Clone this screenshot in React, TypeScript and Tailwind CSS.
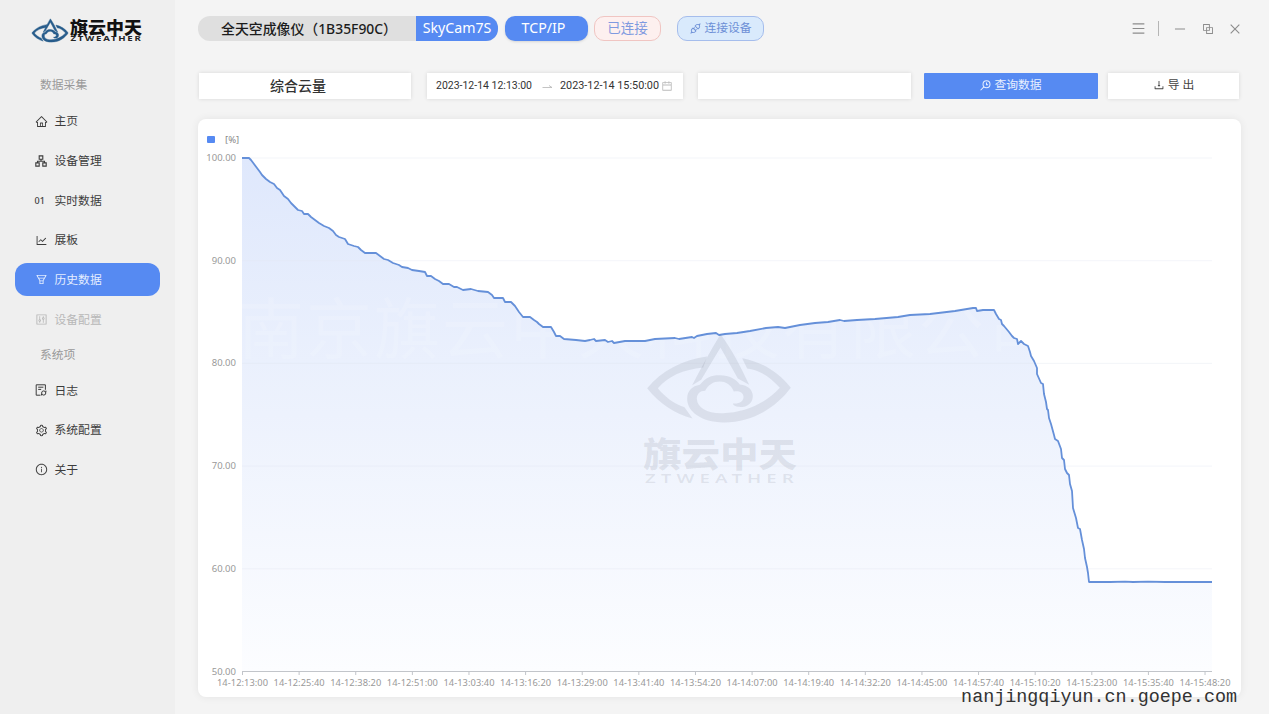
import React from 'react';
import {
  AiOutlineApi,
  AiOutlineBlock,
  AiOutlineCalendar,
  AiOutlineClose,
  AiOutlineControl,
  AiOutlineDownload,
  AiOutlineFunnelPlot,
  AiOutlineHome,
  AiOutlineInfoCircle,
  AiOutlineLineChart,
  AiOutlineMenu,
  AiOutlineMinus,
  AiOutlineSetting,
} from 'react-icons/ai';

const LogoMark: React.FC = () => (
  <g>
    <path d="M692 222 C664 268 636 318 607 375 L634 359 L692 262 L744 355 L778 374 C752 318 726 268 692 222Z" />
    <path d="M652 289 C580 298 515 332 472 384 C510 432 555 460 608 475 L584 441 C552 430 525 410 504 384 C535 348 580 328 640 322Z" />
    <path d="M757 294 C815 305 865 335 903 383 C860 440 790 488 700 487 C635 486 592 455 592 416 C592 392 607 378 630 374 C648 350 670 344 690 345 C720 346 738 356 750 373 C775 375 789 390 789 408 C788 432 768 443 744 440 C734 438 728 434 730 430 C750 432 762 422 761 409 C759 396 748 392 732 394 C724 374 708 364 690 364 C670 364 655 374 646 392 C630 392 621 402 621 416 C622 445 655 461 700 459 C765 457 830 428 870 383 C842 350 810 330 772 325Z" />
  </g>
);

const ClusterIcon: React.FC = () => (
  <svg viewBox="0 0 12 12" className="size-3" fill="none" stroke="currentColor" strokeWidth="1.1">
    <path d="M4.2 .9h3.6v3.4H4.2zM.8 7.9h3.4v3.2H.8zM7.8 7.9h3.4v3.2H7.8zM6 4.3v1.9M2.5 7.9V6.2h7v1.7" />
  </svg>
);

const LogIcon: React.FC = () => (
  <svg viewBox="0 0 12 12" className="size-3" fill="none" stroke="currentColor" strokeWidth="1">
    <path d="M5.5 11.2H1.2V.8h9.2v5M3.2 3.2h5.2M3.2 5.4h3" />
    <circle cx="8.7" cy="9" r="2.1" />
    <path d="M10.9 6.6v1.6M6.5 9.8v1.6" />
  </svg>
);

const SearchIcon: React.FC = () => (
  <svg viewBox="0 0 12 12" className="size-[11px]" fill="none" stroke="currentColor" strokeWidth="1.1">
    <circle cx="7.1" cy="4.7" r="3.8" />
    <path d="M4.2 7.6L.6 11.2M7.1 2.8v2.3h1.7" />
  </svg>
);

interface NavItemProps {
  icon: React.ReactNode;
  label: string;
  active?: boolean;
  disabled?: boolean;
}

const NavItem: React.FC<NavItemProps> = ({ icon, label, active, disabled }) => {
  const color = active ? 'bg-[#568af2] text-[#e4edff]' : disabled ? 'text-[#b8b8b8]' : 'text-[#3c3c3c]';
  return (
    <div className={`flex h-[33px] items-center rounded-xl pl-5 text-[11.8px] ${color}`}>
      <span className="flex w-5 items-center text-[13px]">{icon}</span>
      <span>{label}</span>
    </div>
  );
};

const Sidebar: React.FC = () => (
  <aside className="flex w-[175px] shrink-0 flex-col bg-[#efefef] pl-[14.5px] pr-[15px]">
    <svg viewBox="0 0 112 26" className="ml-4 mt-[17px] h-[26px] w-28">
      <svg x="0.500" y="1.500" width="37" height="24" viewBox="470 220 435 270" preserveAspectRatio="none" fill="#285d8c" stroke="#285d8c" strokeWidth="5">
        <LogoMark />
      </svg>
      <text x="39" y="17" textLength="72" lengthAdjust="spacingAndGlyphs" className="text-[17px] font-black" fill="#111">
        旗云中天
      </text>
      <text x="39.500" y="24.300" textLength="72" lengthAdjust="spacingAndGlyphs" className="text-[6.6px] font-bold tracking-[1.2px]" fill="#222">
        ZTWEATHER
      </text>
    </svg>
    <div className="ml-[25.5px] mt-8 h-[19px] text-[11.8px] leading-[19px] text-[#999]">数据采集</div>
    <nav className="mt-[10.5px] flex flex-col gap-[6.7px]">
      <NavItem icon={<AiOutlineHome />} label="主页" />
      <NavItem icon={<ClusterIcon />} label="设备管理" />
      <NavItem icon={<span className="text-[9px] font-medium">01</span>} label="实时数据" />
      <NavItem icon={<AiOutlineLineChart />} label="展板" />
      <NavItem icon={<AiOutlineFunnelPlot />} label="历史数据" active />
      <NavItem icon={<AiOutlineControl />} label="设备配置" disabled />
    </nav>
    <div className="ml-[25.5px] mt-[9px] h-[19px] text-[11.8px] leading-[19px] text-[#999]">系统项</div>
    <nav className="mt-2.5 flex flex-col gap-[6.7px]">
      <NavItem icon={<LogIcon />} label="日志" />
      <NavItem icon={<AiOutlineSetting />} label="系统配置" />
      <NavItem icon={<AiOutlineInfoCircle />} label="关于" />
    </nav>
  </aside>
);

const Header: React.FC = () => (
  <header className="flex h-[25px] items-center">
    <div className="flex h-[25px] items-center overflow-hidden rounded-[12px] bg-[#dfdfdf] text-[14px]">
      <span className="flex w-[218px] items-center whitespace-nowrap pl-[23px]">
        <svg width="176" height="24">
          <text x="0" y="16.500" textLength="176" lengthAdjust="spacingAndGlyphs" fontWeight="500" fill="#1c1c1c">
            全天空成像仪（1B35F90C）
          </text>
        </svg>
      </span>
      <span className="flex h-full w-[82px] items-center justify-center bg-[#568af2] pb-0.5 text-[14.2px] text-white">SkyCam7S</span>
    </div>
    <div className="ml-[7px] flex h-[25px] w-[83px] items-center justify-center rounded-[10px] bg-[#568af2] pb-0.5 pr-1.5 text-[14.2px] text-white shadow-sm">
      TCP/IP
    </div>
    <div className="ml-1.5 flex h-[25px] w-[67px] items-center justify-center rounded-[10px] border border-[#f0c5c2] bg-[#fdf0ef] text-[13.5px] text-[#7f9ae0]">
      已连接
    </div>
    <div className="ml-4 flex h-[25px] w-[87px] items-center justify-center gap-0.5 rounded-[10px] border border-[#a5bdec] bg-[#d9eafc] pb-px text-[11.8px] text-[#6c8fd6]">
      <AiOutlineApi className="text-[13px]" />
      连接设备
    </div>
    <div className="ml-auto flex items-center pr-[3px] text-[#8c8c8c]">
      <AiOutlineMenu className="text-[15px]" />
      <span className="ml-3 h-[15px] w-px bg-[#b5b5b5]" />
      <AiOutlineMinus className="ml-3.5 text-[14px]" />
      <AiOutlineBlock className="ml-3.5 text-[14px]" />
      <AiOutlineClose className="ml-[13px] text-[14px]" />
    </div>
  </header>
);

const Toolbar: React.FC = () => (
  <div className="mt-8 flex h-[26px] w-[1041px] items-stretch pl-px text-[11.8px] text-[#333]">
    <div className="flex w-[212px] items-center justify-center bg-white pb-0.5 pr-3.5 text-[14px] font-medium shadow-[0_0_4px_rgba(0,0,0,0.12)]">综合云量</div>
    <div className="ml-4 flex w-64 items-center bg-white pl-[9px] shadow-[0_0_4px_rgba(0,0,0,0.12)]">
      <svg width="226" height="24" className="overflow-visible font-['Roboto'] text-[11.5px]" fill="#333">
        <text x="0" y="14.500" textLength="96" lengthAdjust="spacingAndGlyphs">2023-12-14 12:13:00</text>
        <path d="M106.500 13.500h9.500M113 11.500l3 2" stroke="#b5b5b5" strokeWidth="0.800" fill="none" />
        <text x="124" y="14.500" textLength="99" lengthAdjust="spacingAndGlyphs">2023-12-14 15:50:00</text>
      </svg>
      <AiOutlineCalendar className="-ml-px text-[12px] text-[#bbb]" />
    </div>
    <div className="ml-[15px] w-[213px] bg-white shadow-[0_0_4px_rgba(0,0,0,0.12)]" />
    <button className="ml-[13px] flex w-[174px] items-center justify-center gap-[3px] rounded-[1px] bg-[#568af2] pb-0.5 text-[#e9f0ff]">
      <SearchIcon />
      查询数据
    </button>
    <button className="ml-2.5 flex w-[131px] items-center justify-center gap-[3px] bg-white pb-0.5 text-[#444] shadow-[0_0_4px_rgba(0,0,0,0.12)]">
      <AiOutlineDownload className="text-[12px]" />
      导 出
    </button>
  </div>
);

const yTicks = [100, 90, 80, 70, 60, 50];

const xTicks = [
  '14-12:13:00', '14-12:25:40', '14-12:38:20', '14-12:51:00', '14-13:03:40', '14-13:16:20',
  '14-13:29:00', '14-13:41:40', '14-13:54:20', '14-14:07:00', '14-14:19:40', '14-14:32:20',
  '14-14:45:00', '14-14:57:40', '14-15:10:20', '14-15:23:00', '14-15:35:40', '14-15:48:20',
];

const line =
  '242,158 249,158 251,160 254,164 257,168 260,172 262,175 266,179 270,182 274,184 277,188 280,190 284,196 288,199 291,203 294,206 298,210 302,211 304,214 308,214 311,217 315,220 319,223 324,226 329,228 333,231 336,235 339,237 345,239 348,244 354,246 358,247 361,250 365,253 376,253 380,256 384,259 388,260 393,263 399,265 402,267 408,268 412,270 419,271 425,272 427,276 431,276 435,279 439,281 443,284 449,284 454,287 457,287 463,290 471,289 478,291 488,292 492,295 494,298 503,298 505,302 511,302 515,306 519,312 523,317 530,317 534,320 537,322 539,324 543,327 551,327 554,332 556,336 560,336 564,339 576,340 585,341 590,340 594,339 596,341 605,340 608,342 612,341 614,343 625,341 645,341 655,339 675,338 679,339 692,337 694,338 697,336 707,334 716,333 719,335 725,334 737,333 750,331 766,328 778,327 785,328 795,326 800,325 815,323 828,322 840,320 844,321 857,320 875,319 898,317 910,315 930,314 955,311 973,308 976,308 977,311 983,310 994,310 996,314 999,319 1001,320 1002,324 1004,326 1009,332 1012,336 1014,338 1017,339 1018,344 1021,341 1024,344 1028,346 1030,352 1031,356 1034,361 1037,368 1037,374 1041,383 1043,384 1044,394 1046,402 1047,409 1048,410 1049,418 1051,424 1054,435 1055,439 1058,441 1061,449 1062,458 1064,460 1065,469 1067,473 1069,475 1070,484 1072,491 1073,508 1076,518 1078,528 1080,529 1082,540 1084,549 1085,558 1087,567 1088,573 1089,582 1110,582 1125,581.700 1133,582 1148,581.700 1165,582 1185,581.800 1190,582 1200,581.800 1212,582';

// drawn in window coordinates, the card starts at 198,119
const Chart: React.FC = () => (
  <svg viewBox="198 119 1043 578" className="h-[578px] w-[1043px]">
    <defs>
      <linearGradient id="area" x1="0" y1="158" x2="0" y2="671" gradientUnits="userSpaceOnUse">
        <stop offset="0" stopColor="#dfe8fc" />
        <stop offset="0.5" stopColor="#edf2fd" />
        <stop offset="1" stopColor="#fcfdff" />
      </linearGradient>
      <clipPath id="plot">
        <polygon points={`${line} 1212,671 242,671`} />
      </clipPath>
    </defs>
    <rect x="207" y="136" width="8" height="7" rx="1" fill="#568af2" />
    <text x="225" y="143" fontSize="9.500" fill="#888">[%]</text>
    <polygon points={`${line} 1212,671 242,671`} fill="url(#area)" />
    <text x="238" y="353" fontSize="66" letterSpacing="2" fill="#fff" fillOpacity="0.13" clipPath="url(#plot)">
      南京旗云中天科技有限公司
    </text>
    {yTicks.map((tick, i) => (
      <g key={tick}>
        {tick > 50 && <path d={`M242 ${158 + i * 102.7}H1212`} stroke="#e0e6f1" strokeOpacity="0.4" />}
        <text x="236" y={161 + i * 102.7} textAnchor="end" fontSize="9.5" fill="#999">
          {tick.toFixed(2)}
        </text>
      </g>
    ))}
    <path d="M242 671.500H1212" stroke="#c2c5ca" />
    {xTicks.map((tick, i) => (
      <g key={tick}>
        <path d={`M${242.5 + i * 56.62} 671v4`} stroke="#c2c5ca" />
        <text x={242.5 + i * 56.62} y="686" textAnchor="middle" fontSize="9.3" textLength="51" fill="#999">
          {tick}
        </text>
      </g>
    ))}
    <polyline points={line} fill="none" stroke="#6590d9" strokeWidth="1.8" strokeLinejoin="round" />
    <g fill="#596273" fillOpacity="0.13">
      <svg x="646.500" y="333.500" width="145" height="90" viewBox="470 220 435 270">
        <LogoMark />
      </svg>
      <text x="643" y="467" textLength="154" lengthAdjust="spacingAndGlyphs" fontSize="34" fontWeight="900">旗云中天</text>
      <text x="645" y="483" textLength="154" lengthAdjust="spacingAndGlyphs" letterSpacing="3.500" fontSize="13" fontWeight="600">ZTWEATHER</text>
    </g>
  </svg>
);

export default function App() {
  return (
    <div className="relative flex h-[714px] w-[1269px] overflow-hidden bg-[#f4f4f4] font-['Noto_Sans','Noto_Sans_CJK_SC',sans-serif]">
      <Sidebar />
      <main className="flex flex-1 flex-col pl-[23px] pr-6 pt-4">
        <Header />
        <Toolbar />
        <section className="mt-5 h-[578px] w-[1043px] rounded-lg bg-white shadow-[0_0_8px_rgba(0,0,0,0.07)]">
          <Chart />
        </section>
      </main>
      <span className="absolute bottom-1 right-8 font-['Liberation_Mono',monospace] text-[18.4px] leading-6 text-[#333]">
        nanjingqiyun.cn.goepe.com
      </span>
    </div>
  );
}
